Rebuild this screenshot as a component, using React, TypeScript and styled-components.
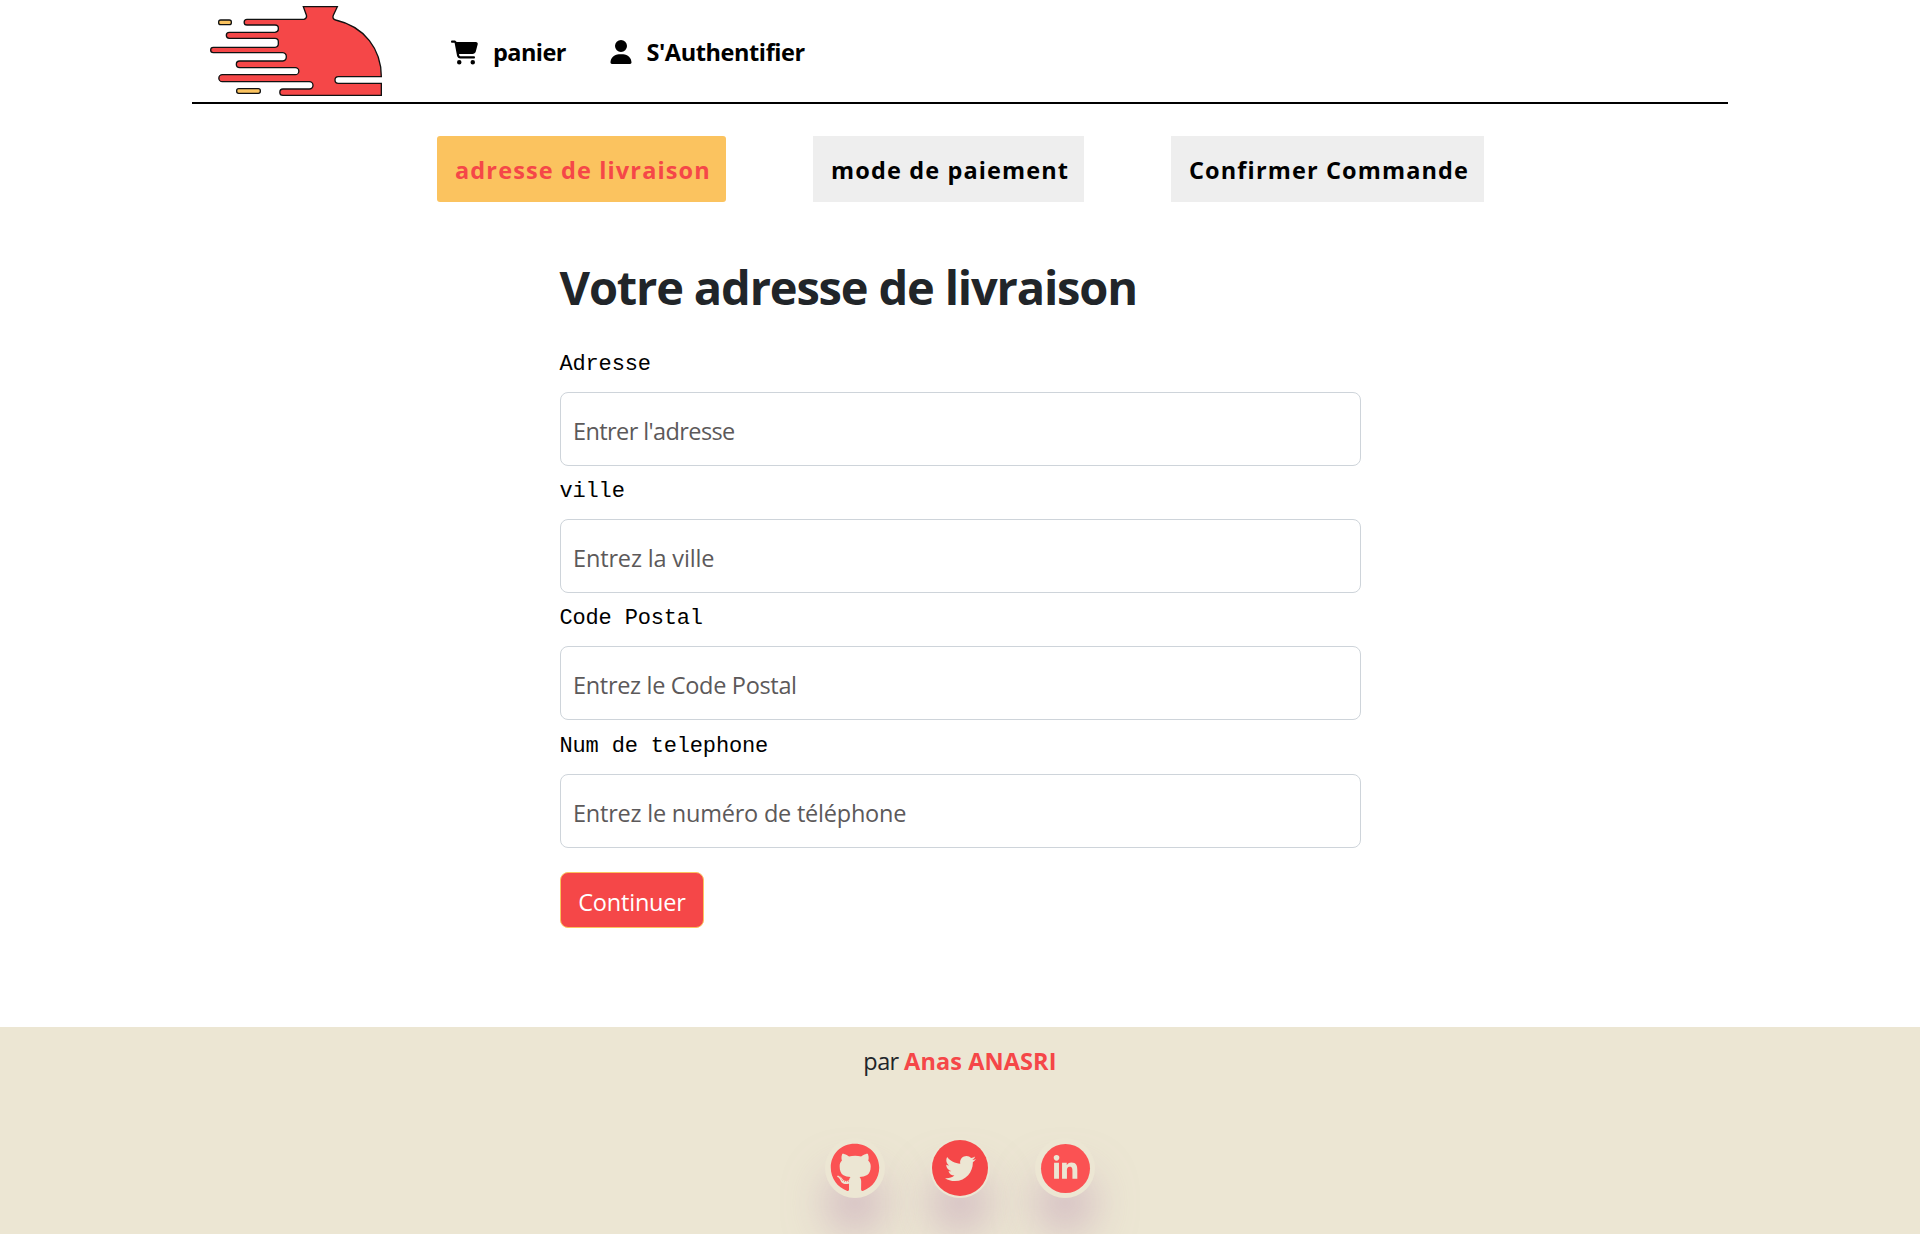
import React from "react";
import styled, { createGlobalStyle } from "styled-components";
import { FaCartShopping, FaUser } from "react-icons/fa6";
import { FaGithub, FaTwitter, FaLinkedinIn } from "react-icons/fa";

const red = "#f54748";
const amber = "#fbc35f";
const sand = "#ece6d3";

const GlobalStyle = createGlobalStyle`
  *, *::before, *::after { box-sizing: border-box; }
  body {
    margin: 0;
    background: #fff;
    color: #212529;
    font-family: "Open Sans", "Noto Sans", sans-serif;
    font-size: 24px;
    line-height: 36px;
  }
`;

const Page = styled.div`
  display: flex;
  flex-direction: column;
  height: 1234px;
  overflow: hidden;
`;

const Header = styled.header`
  display: flex;
  align-items: flex-start;
  width: 1536px;
  height: 104px;
  margin: 0 auto;
  padding-left: 18px;
  border-bottom: 2px solid #000;
`;

const Logo = styled.svg`
  width: 172px;
  height: 100px;
`;

const Nav = styled.nav`
  display: flex;
  gap: 43.5px;
  margin: 34px 0 0 69px;
`;

const NavLink = styled.a<{ $spacing: number; $gap: number }>`
  display: flex;
  align-items: center;
  gap: ${(p) => p.$gap}px;
  height: 36px;
  color: #000;
  font-weight: 700;
  font-size: 23.5px;
  letter-spacing: ${(p) => p.$spacing}px;
  white-space: nowrap;
`;

const Steps = styled.ol`
  display: flex;
  justify-content: center;
  gap: 87px;
  margin: 32px 0 0;
  padding: 0 0 0 1px;
  list-style: none;
`;

const Step = styled.li<{ $active?: boolean; $width: number }>`
  width: ${(p) => p.$width}px;
  height: 66px;
  padding: 1px 0 0 18px;
  border-radius: ${(p) => (p.$active ? 3 : 0)}px;
  background: ${(p) => (p.$active ? amber : "#eee")};
  color: ${(p) => (p.$active ? red : "#000")};
  font-weight: 700;
  font-size: 23.5px;
  letter-spacing: 1.13px;
  line-height: 66px;
  white-space: nowrap;
`;

const Form = styled.form`
  display: flex;
  flex-direction: column;
  align-items: flex-start;
  width: 801px;
  margin: 56px auto 0;
`;

const Title = styled.h1`
  margin: 0 0 29px;
  font-size: 47px;
  font-weight: 700;
  line-height: 58px;
  letter-spacing: -1.17px;
  white-space: nowrap;
`;

const Field = styled.label`
  display: flex;
  flex-direction: column;
  width: 100%;
  height: 127.2px;
`;

const Caption = styled.span`
  height: 47px;
  padding-top: 3px;
  color: #000;
  font-family: "Liberation Mono", monospace;
  font-size: 22px;
  letter-spacing: -0.17px;
  line-height: 34px;
`;

const Input = styled.input<{ $spacing: number }>`
  width: 100%;
  height: 74px;
  padding: 4px 12.5px 0;
  border: 1px solid #ced4da;
  border-radius: 8px;
  background: #fff;
  font-family: inherit;
  font-size: 23.5px;
  letter-spacing: ${(p) => p.$spacing}px;
  &::placeholder {
    color: #5c595a;
    opacity: 1;
  }
`;

const Submit = styled.button`
  width: 144px;
  height: 56px;
  margin-top: 18px;
  padding: 4px 0 0 1px;
  border: 1px solid ${amber};
  border-radius: 8px;
  background: ${red};
  color: #fff;
  font-family: inherit;
  font-size: 23.5px;
  letter-spacing: -0.2px;
`;

const Footer = styled.footer`
  display: flex;
  flex-direction: column;
  align-items: center;
  flex: none;
  height: 207px;
  margin-top: auto;
  padding-top: 16px;
  background: ${sand};
`;

const Credit = styled.p`
  margin: 0 0 59px;
  font-size: 23.5px;
  letter-spacing: -0.6px;
  white-space: nowrap;
`;

const Author = styled.strong`
  color: ${red};
  letter-spacing: 0.1px;
`;

const Social = styled.div`
  display: flex;
  gap: 45px;
`;

const Bubble = styled.a`
  display: flex;
  align-items: center;
  justify-content: center;
  width: 60px;
  height: 60px;
  border-radius: 50%;
  background: ${sand};
  color: #fb5253;
  box-shadow: 0 35px 40px rgba(190, 150, 180, 0.5);
`;

const Disc = styled.span<{ $size: number; $color: string }>`
  display: flex;
  align-items: center;
  justify-content: center;
  width: ${(p) => p.$size}px;
  height: ${(p) => p.$size}px;
  border-radius: 50%;
  background: ${(p) => p.$color};
  color: ${sand};
`;

const fields = [
  { label: "Adresse", hint: "Entrer l'adresse", spacing: -0.6 },
  { label: "ville", hint: "Entrez la ville", spacing: -0.15 },
  { label: "Code Postal", hint: "Entrez le Code Postal", spacing: -0.32 },
  { label: "Num de telephone", hint: "Entrez le numéro de téléphone", spacing: -0.22 },
];

const clochePath =
  "M340 20H442L430 46Q426 57 437 60C524 80 574 148 574 230H445a10 10 0 0 0 0 20H574V286H279" +
  "a9.5 9.5 0 0 1 0-19H358a11 11 0 0 0 0-22H97a10.5 10.5 0 0 1 0-21H316a10.5 10.5 0 0 0 0-21" +
  "H149a10 10 0 0 1 0-20H278q11-1 11-12.500t-11-12.500H70a8 8 0 0 1 0-16H255q10-1 10-10v-7" +
  "q0-10-10-10H118a9 9 0 0 1 0-18H255q10-1 10-9v-4q0-9-10-9H171a8.500 8.500 0 0 1 0-17H342" +
  "Q352 55 349 45Z";

export default function App() {
  return (
    <>
      <GlobalStyle />
      <Page>
        <Header>
          <Logo viewBox="60 0 516 300" stroke="#111" strokeWidth="4">
            <path d={clochePath} fill={red} />
            <rect x="86" y="60" width="38" height="14" rx="6" fill={amber} />
            <rect x="140" y="266" width="71" height="14" rx="6" fill={amber} />
          </Logo>
          <Nav>
            <NavLink $spacing={-0.55} $gap={15}>
              <FaCartShopping size={27} />
              panier
            </NavLink>
            <NavLink $spacing={-0.4} $gap={13}>
              <FaUser size={24} />
              S'Authentifier
            </NavLink>
          </Nav>
        </Header>

        <Steps>
          <Step $active $width={289}>adresse de livraison</Step>
          <Step $width={271}>mode de paiement</Step>
          <Step $width={313}>Confirmer Commande</Step>
        </Steps>

        <Form>
          <Title>Votre adresse de livraison</Title>
          {fields.map((f) => (
            <Field key={f.label}>
              <Caption>{f.label}</Caption>
              <Input placeholder={f.hint} $spacing={f.spacing} />
            </Field>
          ))}
          <Submit type="button">Continuer</Submit>
        </Form>

        <Footer>
          <Credit>
            par <Author>Anas ANASRI</Author>
          </Credit>
          <Social>
            <Bubble>
              <FaGithub size={50} />
            </Bubble>
            <Bubble>
              <Disc $size={56} $color={red}>
                <FaTwitter size={31} />
              </Disc>
            </Bubble>
            <Bubble>
              <Disc $size={49} $color="#fb5253">
                <FaLinkedinIn size={27} />
              </Disc>
            </Bubble>
          </Social>
        </Footer>
      </Page>
    </>
  );
}
